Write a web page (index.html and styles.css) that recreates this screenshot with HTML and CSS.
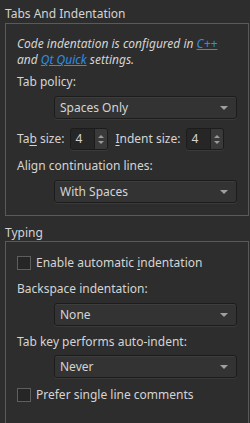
FILE: index.html
```html
<!DOCTYPE html>
<html lang="en">
  <head>
    <meta charset="UTF-8" />
    <title>Tabs And Indentation</title>
    <link rel="stylesheet" href="styles.css">
  </head>
  <body>
    <div class="group-title">Tabs And Indentation</div>
    <div class="group">
      <p class="note">Code indentation is configured in <a href="#">C++</a><br />and <a href="#">Qt Quick</a> settings.</p>
      <div class="label first">Tab policy:</div>
      <div class="combo c1"><span>Spaces Only</span><i class="arrow"></i></div>

      <div class="spin-row">
        <span class="label">Ta<u>b</u> size:</span>
        <div class="spin"><span>4</span><div class="spin-btns"><i class="up"></i><i class="down"></i></div></div>
        <span class="label"><u>I</u>ndent size:</span>
        <div class="spin"><span>4</span><div class="spin-btns"><i class="up"></i><i class="down"></i></div></div>
      </div>

      <div class="label align">Align continuation lines:</div>
      <div class="combo c2"><span>With Spaces</span><i class="arrow"></i></div>
    </div>

    <div class="group-title second">Typing</div>
    <div class="group typing">
      <label class="check first-check"><span class="box"></span><span>Enable automatic <u>i</u>ndentation</span></label>
      <div class="label bs">Backspace indentation:</div>
      <div class="combo c3"><span>None</span><i class="arrow"></i></div>
      <div class="label tabkey">Tab key performs auto-indent:</div>
      <div class="combo c4"><span>Never</span><i class="arrow"></i></div>
      <label class="check last-check"><span class="box"></span><span>Prefer single line comments</span></label>
    </div>
  </body>
</html>
```

FILE: styles.css
```css
html {
  background-color: #2d2d2d;
}
body {
  margin: 0;
  width: 250px;
  height: 423px;
  font-family: "Noto Sans", "Open Sans", sans-serif;
  font-size: 12px;
  line-height: 16px;
  color: #d4d4d4;
  overflow: hidden;
}

.group-title {
  height: 23px;
  padding: 6px 0 0 5px;
  box-sizing: border-box;
  line-height: 16px;
}
.group-title.second {
  height: 25px;
  padding-top: 9px;
}

.group {
  margin: 0 1px 0 5px;
  border: 1px solid #5a5a5a;
  padding: 12px 11px 12px 11px;
}
.group.typing {
  padding-top: 13px;
  padding-bottom: 22px;
}

.note {
  margin: 0;
  font-style: italic;
}
.note a {
  color: #2d8ee6;
  text-decoration: underline;
}

.label {
  white-space: nowrap;
}
.label.first { margin-top: 6px; }
.label.align { margin-top: 8px; }
.label.bs { margin-top: 10px; }
.label.tabkey { margin-top: 8px; }

.combo {
  display: flex;
  align-items: center;
  justify-content: space-between;
  margin-left: 37px;
  height: 23px;
  box-sizing: border-box;
  padding: 0 8px 0 5px;
  background-color: #333333;
  border: 1px solid #1c1c1c;
  border-radius: 3px;
  box-shadow: inset 0 1px 0 #3d3d3d, 0 1px 0 #3a3a3a;
}
.combo.c1 { margin-top: 6px; }
.combo.c2 { margin-top: 6px; }
.combo.c3 { margin-top: 6px; }
.combo.c4 { margin-top: 5px; }

.arrow {
  width: 0;
  height: 0;
  border-left: 4px solid transparent;
  border-right: 4px solid transparent;
  border-top: 4px solid #a0a0a0;
}

.spin-row {
  display: flex;
  align-items: center;
  margin-top: 9px;
}
.spin {
  display: flex;
  width: 38px;
  height: 22px;
  box-sizing: border-box;
  margin: 0 7px 0 6px;
  background-color: #262626;
  border: 1px solid #1c1c1c;
  border-radius: 3px;
  box-shadow: 0 1px 0 #3a3a3a;
}
.spin span {
  flex: 1;
  padding-left: 4px;
  line-height: 20px;
}
.spin-btns {
  width: 12px;
  display: flex;
  flex-direction: column;
  align-items: center;
  justify-content: center;
  gap: 3px;
  background-color: #3a3a3a;
  border-left: 1px solid #1c1c1c;
  border-radius: 0 2px 2px 0;
}
.spin-btns .up {
  border-left: 3px solid transparent;
  border-right: 3px solid transparent;
  border-bottom: 3px solid #9a9a9a;
}
.spin-btns .down {
  border-left: 3px solid transparent;
  border-right: 3px solid transparent;
  border-top: 3px solid #9a9a9a;
}

.check {
  display: flex;
  align-items: center;
  white-space: nowrap;
}
.check .box {
  width: 14px;
  height: 14px;
  box-sizing: border-box;
  margin-right: 5px;
  border: 1px solid #5e5e5e;
  background-color: #262626;
}
.check.last-check { margin-top: 9px; }

u {
  text-decoration-thickness: 1px;
  text-underline-offset: 2px;
}
```
